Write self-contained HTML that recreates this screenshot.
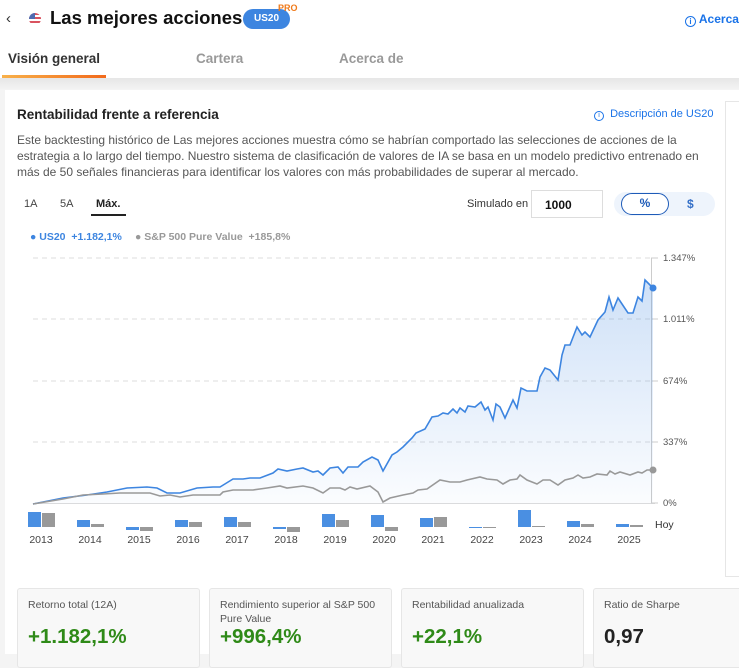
<!DOCTYPE html>
<html><head><meta charset="utf-8"><style>
*{margin:0;padding:0;box-sizing:border-box}
body{width:739px;height:654px;overflow:hidden;background:#f4f4f4;font-family:"Liberation Sans",Arial,sans-serif;position:relative}
.a{position:absolute;white-space:nowrap}
.hdr{position:absolute;left:0;top:0;width:739px;height:78px;background:#fff}
.band{position:absolute;left:0;top:78px;width:739px;height:12px;background:linear-gradient(#e6e6e6,#f4f4f4)}
.card{position:absolute;left:5px;top:90px;width:734px;height:564px;background:#fff}
.stat{position:absolute;top:588px;height:80px;background:#f8f8f8;border:1px solid #e6e6e6;border-radius:3px}
.stat .l{position:absolute;left:10px;top:9px;font-size:10.5px;color:#555;line-height:14px;white-space:normal}
.stat .v{position:absolute;left:10px;top:36px;font-size:20.5px;font-weight:bold;color:#2f8a18}
.yr{position:absolute;top:534px;font-size:10.5px;color:#444;width:40px;text-align:center}
</style></head><body>
<div class="hdr"></div>
<div class="a" style="left:6px;top:10px;font-size:15px;color:#333">‹</div>
<div class="a" style="left:29px;top:13px;width:12px;height:12px;border-radius:6px;background:repeating-linear-gradient(#d9535f 0 2px,#fff 2px 4px);overflow:hidden"><div style="width:6px;height:6px;background:#4f6bb0"></div></div>
<div class="a" style="left:50px;top:7px;font-size:18.5px;font-weight:bold;color:#111">Las mejores acciones</div>
<div class="a" style="left:243px;top:9px;width:47px;height:20px;border-radius:10px;background:#3d85e0;color:#fff;font-size:10px;font-weight:bold;text-align:center;line-height:20px">US20</div>
<div class="a" style="left:278px;top:3px;font-size:9px;color:#f07a1a;font-weight:bold">PRO</div>
<div class="a" style="left:685px;top:12px;font-size:12px;color:#1a73e8;font-weight:bold"><span style="display:inline-block;width:11px;height:11px;border:1.3px solid #1a73e8;border-radius:50%;font-size:8px;line-height:9px;text-align:center;vertical-align:-1px">i</span> Acerca</div>
<div class="a" style="left:8px;top:51px;font-size:13.5px;font-weight:bold;color:#333">Visión general</div>
<div class="a" style="left:196px;top:51px;font-size:13.5px;font-weight:bold;color:#999">Cartera</div>
<div class="a" style="left:339px;top:51px;font-size:13.5px;font-weight:bold;color:#999">Acerca de</div>
<div class="a" style="left:2px;top:75px;width:104px;height:3px;background:linear-gradient(90deg,#f8b14a,#f26a1b)"></div>
<div class="band"></div>
<div class="card"></div>
<div class="a" style="left:725px;top:101px;width:20px;height:476px;border:1px solid #e6e6e6;background:#fff"></div>
<div class="a" style="left:17px;top:107px;font-size:13.5px;font-weight:bold;color:#222">Rentabilidad frente a referencia</div>
<div class="a" style="left:594px;top:108px;font-size:11px;color:#1a73e8"><span style="display:inline-block;width:10px;height:10px;border:1.2px solid #1a73e8;border-radius:50%;font-size:7px;line-height:8px;text-align:center;vertical-align:0">i</span>&nbsp; Descripción de US20</div>
<div class="a" style="left:17px;top:132px;font-size:12px;color:#555;line-height:16px">Este backtesting histórico de Las mejores acciones muestra cómo se habrían comportado las selecciones de acciones de la<br>estrategia a lo largo del tiempo. Nuestro sistema de clasificación de valores de IA se basa en un modelo predictivo entrenado en<br>más de 50 señales financieras para identificar los valores con más probabilidades de superar al mercado.</div>
<div class="a" style="left:24px;top:198px;font-size:11px;color:#444">1A</div>
<div class="a" style="left:60px;top:198px;font-size:11px;color:#444">5A</div>
<div class="a" style="left:96px;top:198px;font-size:11px;color:#222;font-weight:bold">Máx.</div>
<div class="a" style="left:91px;top:214px;width:35px;height:1.5px;background:#222"></div>
<div class="a" style="left:467px;top:198px;font-size:11px;color:#333">Simulado en</div>
<div class="a" style="left:531px;top:190px;width:72px;height:28px;border:1px solid #ddd;font-size:12px;font-weight:bold;padding:7px 0 0 13px;color:#111">1000</div>
<div class="a" style="left:614px;top:192px;width:101px;height:24px;border-radius:12px;background:#eef4fc"></div>
<div class="a" style="left:621px;top:193px;width:48px;height:22px;border-radius:11px;border:1.5px solid #1e5bb8;background:#fff;font-size:12px;text-align:center;line-height:19px;color:#1e5bb8;font-weight:bold">%</div>
<div class="a" style="left:687px;top:197px;font-size:12px;color:#3570c8;font-weight:bold">$</div>
<div class="a" style="left:30px;top:231px;font-size:10.5px;color:#3d85e0;font-weight:bold">● US20 &nbsp;+1.182,1%</div>
<div class="a" style="left:135px;top:231px;font-size:10.5px;color:#999;font-weight:bold">● S&amp;P 500 Pure Value &nbsp;+185,8%</div>
<svg class="a" style="left:0;top:0" width="739" height="654">
<defs><linearGradient id="g" x1="0" y1="0" x2="0" y2="1"><stop offset="0" stop-color="#3d85e0" stop-opacity=".25"/><stop offset="1" stop-color="#3d85e0" stop-opacity=".02"/></linearGradient></defs>
<g stroke="#ddd" stroke-dasharray="5,4"><line x1="33" y1="258" x2="651" y2="258"/><line x1="33" y1="319" x2="651" y2="319"/><line x1="33" y1="381" x2="651" y2="381"/><line x1="33" y1="442" x2="651" y2="442"/></g>
<line x1="33" y1="503.5" x2="655" y2="503.5" stroke="#ddd"/>
<line x1="651.5" y1="258" x2="651.5" y2="503" stroke="#ccc"/>
<g stroke="#ccc"><line x1="651" y1="258" x2="658" y2="258"/><line x1="651" y1="319" x2="658" y2="319"/><line x1="651" y1="381" x2="658" y2="381"/><line x1="651" y1="442" x2="658" y2="442"/><line x1="651" y1="503" x2="658" y2="503"/></g>
<g font-size="9.5" fill="#555" font-family="Liberation Sans"><text x="663" y="261">1.347%</text><text x="663" y="322">1.011%</text><text x="663" y="384">674%</text><text x="663" y="445">337%</text><text x="663" y="506">0%</text></g>
<polygon fill="url(#g)" points="33,504 63,498 87,495 107,492 127,488 147,487 157,488 167,493 180,493 197,488 213,487 220,487 233,479 243,479 250,478 260,478 273,473 278,469 287,471 297,469 303,468 313,472 318,471 323,475 330,468 338,467 343,473 348,467 358,467 363,462 372,457 378,460 383,471 392,455 397,452 403,447 412,438 416,433 425,429 432,417 438,416 443,413 448,414 453,409 457,413 460,408 465,412 468,406 475,407 481,402 485,410 488,407 493,420 496,404 500,407 505,418 513,400 517,408 521,388 527,391 537,391 540,377 545,368 550,370 558,380 562,355 565,345 570,345 577,327 582,335 585,332 590,337 598,320 605,312 609,297 613,310 618,298 628,313 633,313 638,297 642,301 645,280 653,288 653,504"/>
<polyline fill="none" stroke="#3d85e0" stroke-width="1.6" points="33,504 63,498 87,495 107,492 127,488 147,487 157,488 167,493 180,493 197,488 213,487 220,487 233,479 243,479 250,478 260,478 273,473 278,469 287,471 297,469 303,468 313,472 318,471 323,475 330,468 338,467 343,473 348,467 358,467 363,462 372,457 378,460 383,471 392,455 397,452 403,447 412,438 416,433 425,429 432,417 438,416 443,413 448,414 453,409 457,413 460,408 465,412 468,406 475,407 481,402 485,410 488,407 493,420 496,404 500,407 505,418 513,400 517,408 521,388 527,391 537,391 540,377 545,368 550,370 558,380 562,355 565,345 570,345 577,327 582,335 585,332 590,337 598,320 605,312 609,297 613,310 618,298 628,313 633,313 638,297 642,301 645,280 653,288"/>
<polyline fill="none" stroke="#999" stroke-width="1.6" points="33,504 63,499 83,495 103,494 120,493 137,493 150,493 160,496 170,495 180,497 193,495 220,495 223,492 233,490 253,490 267,488 280,486 287,488 303,486 313,488 323,493 330,488 340,488 345,490 350,487 357,489 370,486 378,492 383,502 390,498 403,495 413,493 418,490 427,489 440,480 450,482 460,482 467,480 480,477 487,479 497,480 503,484 510,480 517,479 520,475 527,480 537,484 543,480 550,480 558,485 565,480 573,478 578,475 583,478 590,477 597,474 607,475 610,471 615,474 620,472 630,475 638,472 642,473 647,470 653,470"/>
<circle cx="653" cy="288" r="3.5" fill="#3d85e0"/><circle cx="653" cy="470" r="3.5" fill="#999"/>
<g fill="#4a8fe2">
<rect x="28" y="512" width="13" height="15"/><rect x="77" y="520" width="13" height="7"/><rect x="126" y="527" width="13" height="3"/><rect x="175" y="520" width="13" height="7"/><rect x="224" y="517" width="13" height="10"/><rect x="273" y="527" width="13" height="2"/><rect x="322" y="514" width="13" height="13"/><rect x="371" y="515" width="13" height="12"/><rect x="420" y="518" width="13" height="9"/><rect x="469" y="527" width="13" height="1"/><rect x="518" y="510" width="13" height="17"/><rect x="567" y="521" width="13" height="6"/><rect x="616" y="524" width="13" height="3"/></g>
<g fill="#999">
<rect x="42" y="513" width="13" height="14"/><rect x="91" y="524" width="13" height="3"/><rect x="140" y="527" width="13" height="4"/><rect x="189" y="522" width="13" height="5"/><rect x="238" y="522" width="13" height="5"/><rect x="287" y="527" width="13" height="5"/><rect x="336" y="520" width="13" height="7"/><rect x="385" y="527" width="13" height="4"/><rect x="434" y="517" width="13" height="10"/><rect x="483" y="527" width="13" height="1"/><rect x="532" y="526" width="13" height="1"/><rect x="581" y="524" width="13" height="3"/><rect x="630" y="525" width="13" height="2"/></g>
<text x="655" y="528" font-size="10.5" fill="#333" font-family="Liberation Sans">Hoy</text>
</svg>
<div class="yr" style="left:21px">2013</div><div class="yr" style="left:70px">2014</div><div class="yr" style="left:119px">2015</div><div class="yr" style="left:168px">2016</div><div class="yr" style="left:217px">2017</div><div class="yr" style="left:266px">2018</div><div class="yr" style="left:315px">2019</div><div class="yr" style="left:364px">2020</div><div class="yr" style="left:413px">2021</div><div class="yr" style="left:462px">2022</div><div class="yr" style="left:511px">2023</div><div class="yr" style="left:560px">2024</div><div class="yr" style="left:609px">2025</div>
<div class="stat" style="left:17px;width:183px"><div class="l">Retorno total (12A)</div><div class="v">+1.182,1%</div></div>
<div class="stat" style="left:209px;width:183px"><div class="l" style="width:165px">Rendimiento superior al S&amp;P 500 Pure Value</div><div class="v">+996,4%</div></div>
<div class="stat" style="left:401px;width:183px"><div class="l">Rentabilidad anualizada</div><div class="v">+22,1%</div></div>
<div class="stat" style="left:593px;width:160px"><div class="l">Ratio de Sharpe</div><div class="v" style="color:#222">0,97</div></div>
</body></html>
